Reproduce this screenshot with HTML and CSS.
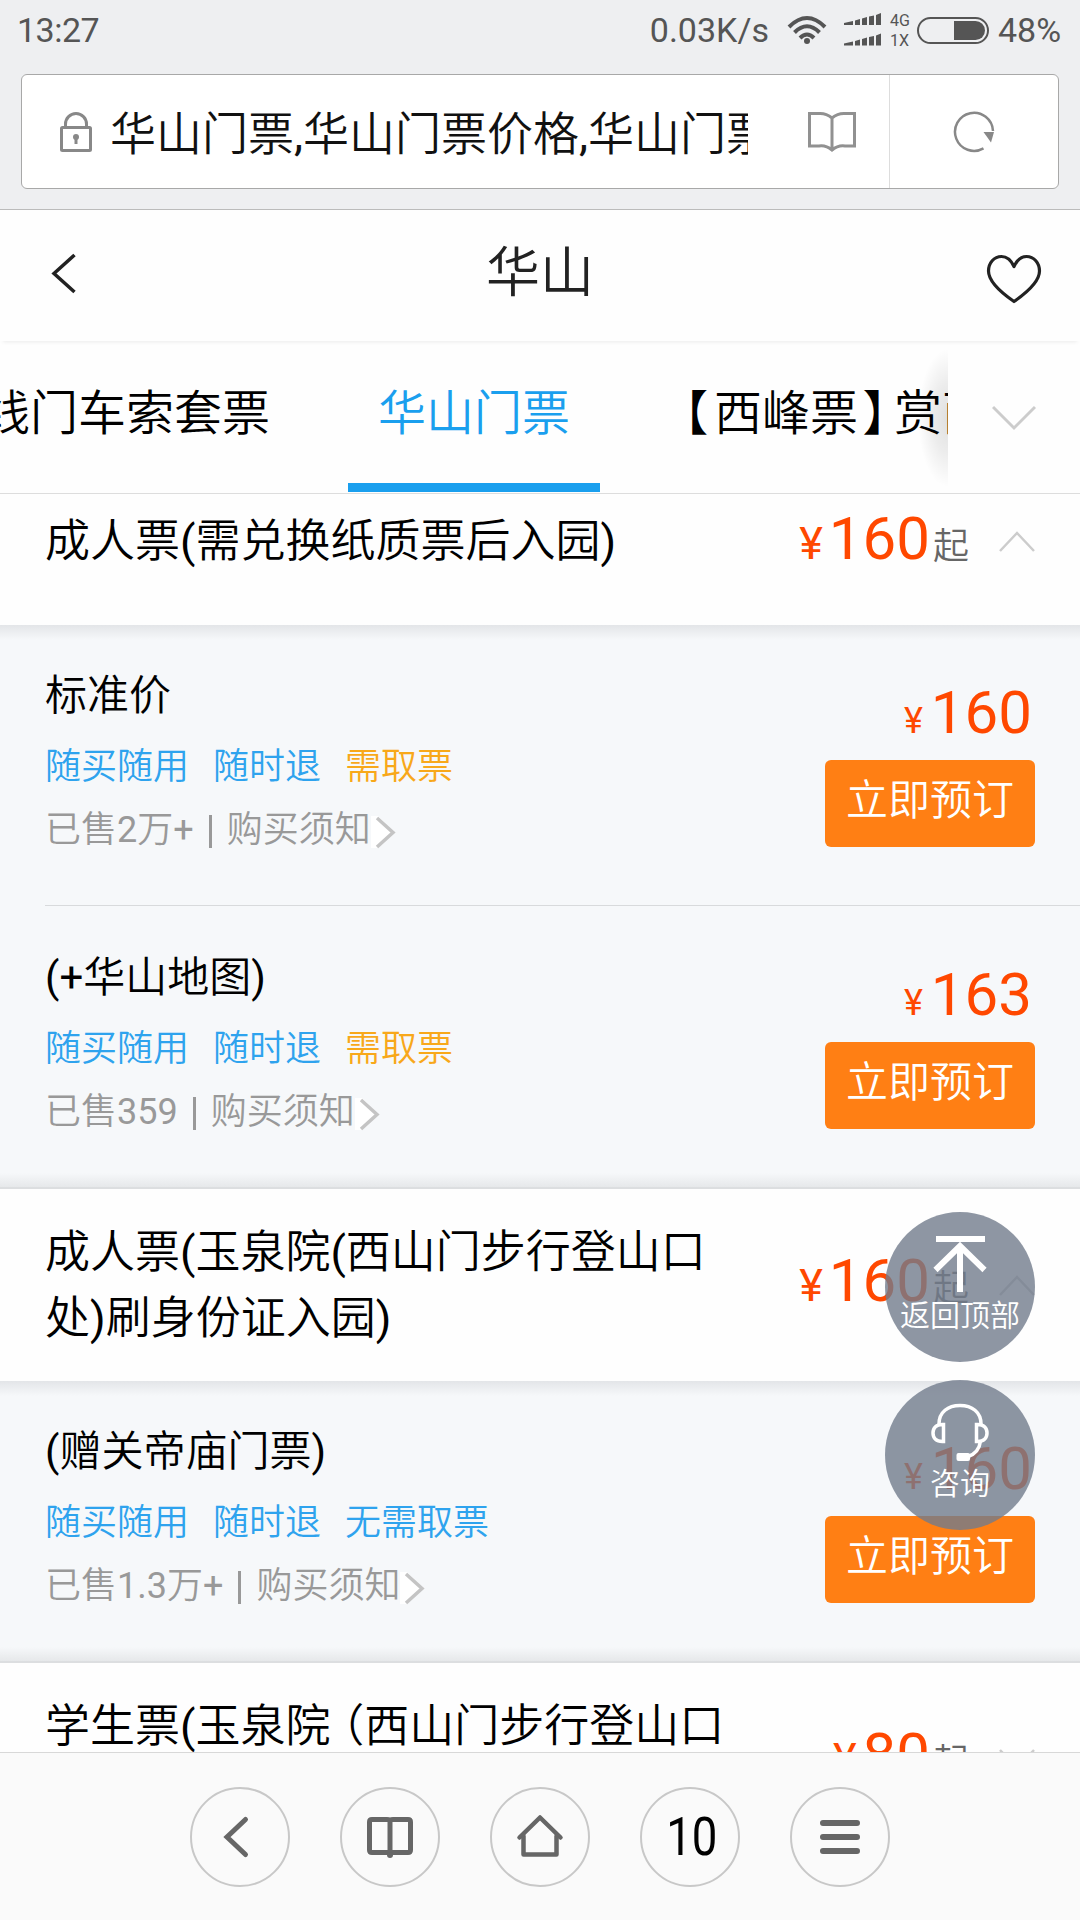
FILE: index.html
```html
<!DOCTYPE html>
<html lang="zh-CN">
<head>
<meta charset="utf-8">
<title>华山门票</title>
<link rel="stylesheet" href="styles.css">
</head>
<body>
<div class="screen">
  <div class="statusbar">
    <span class="clock">13:27</span>
    <span class="speed">0.03K/s</span>
    <svg class="wifi" width="40" height="30" viewBox="0 0 40 30" fill="none" stroke="#555" stroke-width="4">
      <path d="M2 12Q20 -6 38 12M7.500 17.500Q20 5 32.500 17.500M13 23Q20 16 27 23"/>
      <circle cx="20" cy="26" r="3" fill="#555" stroke="none"/>
    </svg>
    <svg class="signal" width="38" height="34" viewBox="0 0 38 34" fill="#555">
      <path id="bars" d="M0 10L9 8V12H0zM11 7.500L16 6V12H11zM18 5.500L23 4V12H18zM25 3.500L30 2.500V12H25zM32 2L37 0V12H32z"/>
      <use href="#bars" y="20.500"/>
    </svg>
    <span class="nets"><span>4G</span><span>1X</span></span>
    <span class="battery"><span class="charge"></span></span>
    <span class="percent">48%</span>
  </div>
  <div class="address">
    <svg class="lock" width="32" height="41" viewBox="0 0 32 41" fill="none" stroke="#888" stroke-width="3">
      <path d="M5.500 16V13a10.500 10.500 0 0 1 21 0V16"/><rect x="1.500" y="16.500" width="29" height="23" rx="1"/>
      <circle cx="16" cy="26" r="3" fill="#888" stroke="none"/><path d="M16 26V33"/>
    </svg>
    <span class="url">华山门票,华山门票价格,华山门票预订</span>
    <svg class="reader" width="48" height="42" viewBox="0 0 48 42" fill="none" stroke="#919191" stroke-width="3">
      <path d="M24 7Q18 2 11 2.500H1.500V35H11Q18 34 24 39Q30 34 37 35H46.500V2.500H37Q30 2 24 7V39"/>
    </svg>
    <span class="reload">
      <svg width="42" height="42" viewBox="0 0 42 42" fill="none" stroke="#888" stroke-width="2.500">
        <path d="M30.500 37.300A19 19 0 1 1 40 20"/><path d="M30.500 21H41L38 31.500z" fill="#888" stroke="none"/>
      </svg>
    </span>
  </div>
  <div class="header">
    <svg class="back" width="26" height="42" viewBox="0 0 26 42" fill="none" stroke="#222" stroke-width="3.500"><path d="M23.500 2L3 20.500L23.500 39"/></svg>
    <span class="heading">华山</span>
    <svg class="heart" width="56" height="50" viewBox="0 0 56 50" fill="none" stroke="#222" stroke-width="3.200" stroke-linejoin="round"><path d="M28 12.500C24.500 5 20 2.500 15.500 2.500C8 2.500 2.500 9 2.500 17C2.500 28 15 38.500 28 47.500C41 38.500 53.500 28 53.500 17C53.500 9 48 2.500 40.500 2.500C36 2.500 31.500 5 28 12.500Z"/></svg>
  </div>
  <div class="tabs">
    <div class="strip">
      <span class="tab">西线门车索套票</span>
      <span class="tab active">华山门票</span>
      <span class="tab"><span class="lens">【</span>西峰票<span class="lens-end">】</span>赏西峰</span>
    </div>
    <div class="expand">
      <svg width="44" height="28" viewBox="0 0 44 28" fill="none" stroke="#ccc" stroke-width="3"><path d="M1 2L22 23L43 2"/></svg>
    </div>
  </div>

  <div class="list">
    <div class="group first">
      <div class="name">成人票(需兑换纸质票后入园)</div>
      <div class="from"><span class="yen">¥</span><span class="num">160</span><span class="qi">起</span></div>
      <svg class="arrow" width="36" height="22" viewBox="0 0 36 22" fill="none" stroke="#ccc" stroke-width="2.500"><path d="M1 20L18 2L35 20"/></svg>
    </div>
    <div class="panel">
      <div class="item lined">
        <div class="info">
          <div class="title">标准价</div>
          <div class="tags"><span>随买随用</span><span>随时退</span><span class="amber">需取票</span></div>
          <div class="sold">已售2万+<i class="bar"></i>购买须知<svg width="26" height="34" viewBox="0 0 26 34" fill="none"><path d="M0 0H7L23 16L7 32H0z" fill="#fff"/><path d="M6 2L22 16.500L6 31" stroke="#c4c4c4" stroke-width="3.500"/></svg></div>
        </div>
        <div class="buy"><div class="price"><span class="yen">¥</span><span class="num">160</span></div><div class="book">立即预订</div></div>
      </div>
      <div class="item second">
        <div class="info">
          <div class="title">(+华山地图)</div>
          <div class="tags"><span>随买随用</span><span>随时退</span><span class="amber">需取票</span></div>
          <div class="sold">已售359<i class="bar"></i>购买须知<svg width="26" height="34" viewBox="0 0 26 34" fill="none"><path d="M0 0H7L23 16L7 32H0z" fill="#fff"/><path d="M6 2L22 16.500L6 31" stroke="#c4c4c4" stroke-width="3.500"/></svg></div>
        </div>
        <div class="buy"><div class="price"><span class="yen">¥</span><span class="num">163</span></div><div class="book">立即预订</div></div>
      </div>
    </div>
    <div class="group">
      <div class="name">成人票(玉泉院(西山门步行登山口<br>处)刷身份证入园)</div>
      <div class="from"><span class="yen">¥</span><span class="num">160</span><span class="qi">起</span></div>
      <svg class="arrow" width="36" height="22" viewBox="0 0 36 22" fill="none" stroke="#ccc" stroke-width="2.500"><path d="M1 20L18 2L35 20"/></svg>
    </div>
    <div class="panel">
      <div class="item">
        <div class="info">
          <div class="title">(赠关帝庙门票)</div>
          <div class="tags"><span>随买随用</span><span>随时退</span><span>无需取票</span></div>
          <div class="sold">已售1.3万+<i class="bar"></i>购买须知<svg width="26" height="34" viewBox="0 0 26 34" fill="none"><path d="M0 0H7L23 16L7 32H0z" fill="#fff"/><path d="M6 2L22 16.500L6 31" stroke="#c4c4c4" stroke-width="3.500"/></svg></div>
        </div>
        <div class="buy"><div class="price"><span class="yen">¥</span><span class="num">160</span></div><div class="book">立即预订</div></div>
      </div>
    </div>
    <div class="group">
      <div class="name">学生票(玉泉院<span class="open">（</span>西山门步行登山口<br>&nbsp;</div>
      <div class="from"><span class="yen">¥</span><span class="num">80</span><span class="qi">起</span></div>
      <svg class="arrow" width="36" height="22" viewBox="0 0 36 22" fill="none" stroke="#ccc" stroke-width="2.500"><path d="M1 1L18 19L35 1"/></svg>
    </div>
  </div>

  <div class="floats">
    <div class="float">
      <svg width="56" height="60" viewBox="0 0 56 60" fill="none" stroke="#fff" stroke-width="6"><path d="M4 5H53M28 11V58M3.500 36L28 12L52.500 36"/></svg>
      <span>返回顶部</span>
    </div>
    <div class="float">
      <svg width="60" height="60" viewBox="0 0 60 60" fill="none" stroke="#fff" stroke-width="3.500">
        <path d="M9 22C9 10 18 3.500 30 3.500S51 10 51 22"/>
        <path d="M13.500 22.500V39.500C6 40 3 36 3 31S6 22 13.500 22.500zM46.500 22.500V39.500C54 40 57 36 57 31S54 22 46.500 22.500z"/>
        <path d="M50.500 39Q49 51 38 54.500"/><rect x="26.500" y="51" width="13.500" height="8" rx="2" fill="#fff" stroke="none"/>
      </svg>
      <span>咨询</span>
    </div>
  </div>

  <div class="footer">
    <span class="key"><svg width="50" height="50" viewBox="0 0 50 50" fill="none" stroke="#666" stroke-width="5" stroke-linecap="round"><path d="M30.500 7.500L12 25L30.500 42.500"/></svg></span>
    <span class="key"><svg width="50" height="50" viewBox="0 0 50 50" fill="none" stroke="#666" stroke-width="5"><path d="M25 9V42M25 9.500Q25 7.500 22 7.500H7Q4.500 7.500 4.500 10V38Q4.500 40.500 7 40.500H43Q45.500 40.500 45.500 38V10Q45.500 7.500 43 7.500H28Q25 7.500 25 9.500"/><circle cx="25" cy="43" r="3" fill="#666" stroke="none"/></svg></span>
    <span class="key"><svg width="50" height="50" viewBox="0 0 50 50" fill="none" stroke="#666" stroke-width="4.500" stroke-linecap="round" stroke-linejoin="round"><path d="M4.500 25.500L25 5.500L45.500 25.500"/><path d="M8.500 24V42.500H41.500V24"/></svg></span>
    <span class="key"><span class="count">10</span></span>
    <span class="key"><svg width="50" height="50" viewBox="0 0 50 50" fill="none" stroke="#666" stroke-width="6" stroke-linecap="round"><path d="M8 11H42M8 25H42M8 39H42"/></svg></span>
  </div>
</div>
</body>
</html>
```
FILE: styles.css
```css
* { box-sizing: border-box; }
body { margin: 0; }
svg { display: block; flex: none; }
.screen {
  position: relative;
  width: 1080px;
  height: 1920px;
  overflow: hidden;
  display: flex;
  flex-direction: column;
  background: #fefefe;
  color: #000;
  font-family: Roboto, "Noto Sans CJK SC DemiLight", "Noto Sans CJK SC Light", "Noto Sans CJK SC", sans-serif;
  font-weight: 400;
  white-space: nowrap;
}

/* Phone status bar */
.statusbar {
  flex: none;
  height: 74px;
  padding: 0 16px 14px 17px;
  display: flex;
  align-items: center;
  background: #eeeff1;
  color: #555;
  font-size: 34px;
}
.clock { flex: 1; letter-spacing: -0.5px; }
.wifi { margin-left: 18px; }
.signal { margin-left: 17px; }
.nets {
  display: flex;
  flex-direction: column;
  margin-left: 8px;
  width: 27px;
  padding-top: 1px;
  font-size: 16px;
  line-height: 20px;
}
.battery {
  width: 72px;
  height: 27px;
  padding: 2px;
  border: 2px solid #555;
  border-radius: 14px;
  display: flex;
  justify-content: flex-end;
}
.charge { width: 31px; background: #555; border-radius: 0 10px 10px 0; }
.percent { width: 66px; margin-left: 9px; letter-spacing: 0; }

/* Browser address bar */
.address {
  flex: none;
  height: 115px;
  margin: 0 21px;
  padding-left: 38px;
  display: flex;
  align-items: center;
  background: #fff;
  border: 1px solid #a8a8a8;
  border-radius: 6px;
  box-shadow: 0 0 0 80px #eeeff1;
  clip-path: inset(0 -21px -21px -21px);
}
.url {
  width: 638px;
  margin-left: 18px;
  padding-top: 4px;
  overflow: hidden;
  font-size: 46px;
  line-height: 64px;
  color: #111;
}
.reader { margin-left: 60px; }
.reload {
  align-self: stretch;
  flex: 1;
  margin-left: 33px;
  border-left: 1px solid #ddd;
  display: flex;
  align-items: center;
  justify-content: center;
}

/* Page header */
.header {
  z-index: 1;
  flex: none;
  height: 132px;
  margin-top: 20px;
  padding: 0 38px 0 51px;
  display: flex;
  align-items: center;
  justify-content: space-between;
  background: #fefefe;
  border-top: 1px solid #bbb;
  box-shadow: 0 4px 4px -3px rgba(0, 0, 0, 0.08);
}
.heading { margin: -3px 0 0 17px; font-size: 54px; color: #222; line-height: 60px; }
.back { margin-top: -3px; }
.heart { margin-top: 7px; }

/* Tabs */
.tabs {
  flex: none;
  height: 153px;
  display: flex;
  border-bottom: 1px solid #ddd;
}
.strip {
  width: 948px;
  padding-bottom: 1px;
  display: flex;
  gap: 48px;
  overflow: hidden;
}
.tab {
  flex: none;
  padding: 0 30px;
  font-size: 48px;
  line-height: 146px;
}
.tab:first-child { margin-left: -96px; }
.active { color: #1a9fee; box-shadow: inset 0 -9px #1a9fee; }
.lens { margin: 0 0.12em 0 -0.37em; }
.lens-end { margin: 0 -0.34em 0 0.09em; }
.open { margin-left: -0.25em; }
.expand {
  position: relative;
  flex: 1;
  display: flex;
  align-items: center;
  padding: 4px 0 0 44px;
}
.expand::before {
  content: "";
  position: absolute;
  left: -30px;
  top: 8px;
  width: 30px;
  height: 138px;
  background: radial-gradient(ellipse 30px 69px at right center, rgba(0, 0, 0, 0.12), rgba(0, 0, 0, 0.07) 50%, transparent);
}

/* Ticket groups */
.list { height: 1259px; flex: none; overflow: hidden; border-bottom: 1px solid #d8d8d8; }
.group {
  height: 192px;
  padding: 2px 45px 0;
  display: flex;
  align-items: center;
}
.first { height: 131px; padding-bottom: 38px; }
.name { flex: 1; font-size: 45px; line-height: 66px; }
.from {
  display: flex;
  align-items: baseline;
  line-height: 60px;
  color: #ff4800;
  margin-top: -3px;
}
.first .from { margin-top: 3px; }
.from .yen { font-size: 45px; margin-right: 6px; }
.num { font-size: 60px; }
.qi { margin-left: 3px; font-size: 36px; color: #666; }
.arrow { margin-left: 30px; }

/* Purchase options */
.panel {
  background: linear-gradient(#e3e5e8, transparent 15px), linear-gradient(0deg, #dcdee0 2px, #e6e8ea 2px, transparent 16px), #f6f8fa;
}
.item { height: 282px; display: flex; padding-right: 45px; margin-left: 45px; }
.lined { height: 281px; border-bottom: 1px solid #d8dadc; }
.second { height: 283px; padding-top: 1px; }
.info { flex: 1; padding-top: 46px; }
.title { font-size: 42px; line-height: 50px; }
.tags {
  margin-top: 24px;
  display: flex;
  gap: 24px;
  font-size: 36px;
  line-height: 44px;
  color: #2ea3ee;
}
.amber { color: #f8a81a; }
.sold {
  margin-top: 19px;
  display: flex;
  align-items: center;
  font-size: 36px;
  line-height: 44px;
  color: #999;
}
.bar { width: 3px; height: 33px; margin: 3px 15px 0 15px; background: #999; }
.sold svg { margin: 5px 0 0; }
.buy { width: 210px; padding-top: 58px; }
.price {
  height: 60px;
  padding-right: 3px;
  display: flex;
  align-items: baseline;
  justify-content: flex-end;
  line-height: 60px;
  color: #ff4800;
}
.price .yen { font-size: 36px; margin-right: 8px; }
.book {
  margin-top: 17px;
  height: 87px;
  border-radius: 6px;
  background: #ff7f14;
  color: #fff;
  font-size: 42px;
  line-height: 81px;
  text-align: center;
}

/* Floating buttons */
.floats {
  position: absolute;
  right: 45px;
  top: 1212px;
  display: flex;
  flex-direction: column;
  gap: 18px;
}
.float {
  width: 150px;
  height: 150px;
  padding-top: 22px;
  border-radius: 50%;
  background: rgba(114, 124, 140, 0.8);
  color: #fff;
  font-size: 30px;
  line-height: 44px;
  display: flex;
  flex-direction: column;
  align-items: center;
}

/* Browser toolbar */
.footer {
  flex: 1;
  padding-top: 1px;
  display: flex;
  justify-content: center;
  align-items: center;
  gap: 50px;
  background: #fafafa;
}
.key {
  width: 100px;
  height: 100px;
  border: 2px solid #c8c8c8;
  border-radius: 50%;
  display: flex;
  align-items: center;
  justify-content: center;
}
.count { font-size: 53px; margin-left: 3px; transform: scaleX(0.86); }
```
